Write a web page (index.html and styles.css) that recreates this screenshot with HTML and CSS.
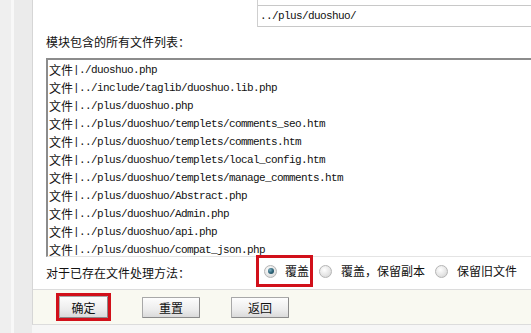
FILE: index.html
```html
<!DOCTYPE html>
<html>
<head>
<meta charset="utf-8">
<link rel="stylesheet" href="styles.css">
</head>
<body>
<div class="page">
  <div class="side"></div>
  <div class="main">
    <div class="top">
      <div class="trow first"></div>
      <div class="trow"><span class="mono">../plus/duoshuo/</span></div>
    </div>
    <div class="label">模块包含的所有文件列表：</div>
    <div class="filelist">
      <div class="f"><span class="cjk">文件</span><span class="mono">|./duoshuo.php</span></div>
      <div class="f"><span class="cjk">文件</span><span class="mono">|../include/taglib/duoshuo.lib.php</span></div>
      <div class="f"><span class="cjk">文件</span><span class="mono">|../plus/duoshuo.php</span></div>
      <div class="f"><span class="cjk">文件</span><span class="mono">|../plus/duoshuo/templets/comments_seo.htm</span></div>
      <div class="f"><span class="cjk">文件</span><span class="mono">|../plus/duoshuo/templets/comments.htm</span></div>
      <div class="f"><span class="cjk">文件</span><span class="mono">|../plus/duoshuo/templets/local_config.htm</span></div>
      <div class="f"><span class="cjk">文件</span><span class="mono">|../plus/duoshuo/templets/manage_comments.htm</span></div>
      <div class="f"><span class="cjk">文件</span><span class="mono">|../plus/duoshuo/Abstract.php</span></div>
      <div class="f"><span class="cjk">文件</span><span class="mono">|../plus/duoshuo/Admin.php</span></div>
      <div class="f"><span class="cjk">文件</span><span class="mono">|../plus/duoshuo/api.php</span></div>
      <div class="f"><span class="cjk">文件</span><span class="mono">|../plus/duoshuo/compat_json.php</span></div>
    </div>
    <div class="opts">
      <div class="optlabel">对于已存在文件处理方法：</div>
      <div class="choices">
        <label class="hl choice"><span class="radio checked"></span><span class="ctext">覆盖</span></label>
        <label class="choice"><span class="radio"></span><span class="ctext">覆盖，保留副本</span></label>
        <label class="choice"><span class="radio"></span><span class="ctext">保留旧文件</span></label>
      </div>
    </div>
    <div class="bar">
      <div class="hlbtn"><button class="btn ok">确定</button></div>
      <button class="btn">重置</button>
      <button class="btn">返回</button>
    </div>
  </div>
</div>
</body>
</html>
```

FILE: styles.css
```css
html, body {
  margin: 0;
  padding: 0;
  overflow: hidden;
  width: 531px;
  height: 333px;
  background: #f6f6f6;
}
body {
  font-family: "Noto Sans CJK SC", "Liberation Sans", sans-serif;
  font-size: 12px;
  color: #111;
}
.page {
  display: flex;
  width: 531px;
  height: 333px;
}
.side {
  flex: 0 0 32px;
  background: linear-gradient(to right, #efefef 0, #efefef 11px, #f8f8f8 11px, #f8f8f8 14px, #ebebeb 14px, #ebebeb 31px);
}
.main {
  flex: 1 1 auto;
  min-width: 0;
  height: 325px;
  background: #fff;
  border-left: 1px solid #d6d6d6;
  border-bottom: 1px solid #dcdcdc;
  box-sizing: border-box;
  display: flex;
  flex-direction: column;
  overflow: hidden;
}
.mono {
  font-family: "Liberation Mono", monospace;
  font-size: 11px;
  letter-spacing: -0.6px;
  color: #111;
}
.cjk {
  font-family: "Noto Sans CJK SC", sans-serif;
  font-size: 12px;
}
.top {
  margin-left: 224px;
  border-left: 1px solid #cfcfcf;
  height: 27px;
  box-sizing: border-box;
}
.trow {
  height: 21px;
  border-bottom: 1px solid #c8c8c8;
  box-sizing: border-box;
  display: flex;
  align-items: center;
  padding-left: 2px;
}
.trow.first {
  height: 6px;
  border-bottom: 1px solid #c8c8c8;
}
.label {
  margin-top: 7px;
  padding-left: 13px;
  line-height: 16px;
  height: 16px;
}
.filelist {
  margin-top: 8px;
  margin-left: 13px;
  height: 199px;
  box-sizing: border-box;
  border-top: 2px solid #8c8c8c;
  border-left: 2px solid #8c8c8c;
  border-bottom: 1px solid #e4e4e4;
  padding: 1px 0 0 1px;
  overflow: hidden;
  background: #fff;
}
.f {
  height: 18px;
  line-height: 18px;
  white-space: nowrap;
  display: flex;
  align-items: center;
}
.opts {
  height: 33px;
  box-sizing: border-box;
  border-bottom: 1px solid #dcdcdc;
  display: flex;
  align-items: flex-start;
  padding-left: 13px;
}
.optlabel {
  width: 210px;
  flex: 0 0 210px;
  line-height: 16px;
  margin-top: 8px;
}
.choices {
  display: flex;
  align-items: center;
  margin-top: -2px;
  height: 32px;
}
.choice {
  display: flex;
  align-items: center;
  margin-right: 10px;
}
.choice.hl {
  border: 3px solid #d1101a;
  height: 32px;
  box-sizing: border-box;
  padding: 0 1px 0 5px;
  margin-right: 6px;
}
.ctext {
  margin-left: 9px;
  line-height: 16px;
  white-space: nowrap;
}
.choice.hl .ctext {
  margin-left: 8px;
}
.radio {
  width: 13px;
  height: 13px;
  flex: 0 0 13px;
  box-sizing: border-box;
  border-radius: 50%;
  border: 1px solid #b5b5b5;
  background: radial-gradient(circle at 40% 35%, #ffffff 0, #e6e6e6 55%, #cfcfcf 100%);
  display: inline-flex;
  align-items: center;
  justify-content: center;
}
.radio.checked::after {
  content: "";
  width: 6px;
  height: 6px;
  border-radius: 50%;
  background: radial-gradient(circle at 35% 35%, #7fb0c4 0, #2f6579 50%, #173e4d 100%);
}
.bar {
  height: 34px;
  box-sizing: border-box;
  background: #f9f9f1;
  display: flex;
  align-items: center;
  padding-left: 23px;
  gap: 31px;
}
.hlbtn {
  border: 3px solid #d1101a;
  display: flex;
}
.btn {
  font-family: "Noto Sans CJK SC", sans-serif;
  font-size: 12px;
  color: #111;
  width: 58px;
  height: 21px;
  padding: 0;
  border: 1px solid #a8a8a8;
  border-right-color: #8a8a8a;
  border-bottom-color: #8a8a8a;
  border-radius: 1px;
  background: linear-gradient(#fdfdfd, #ededed 60%, #dadada);
  line-height: 19px;
  box-sizing: border-box;
}
.btn.ok {
  width: 49px;
  height: 22px;
}
```
